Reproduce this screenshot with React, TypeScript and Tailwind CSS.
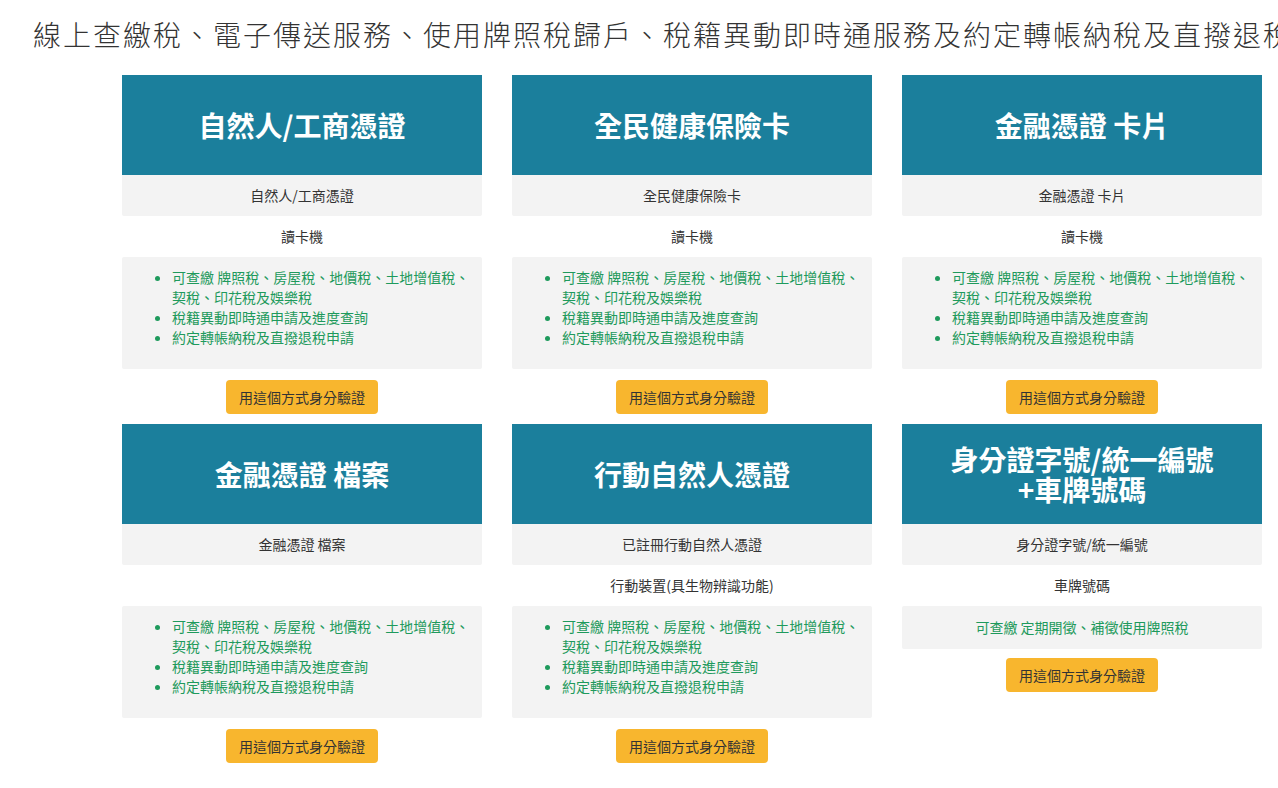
import React from "react";

type Card = {
  title: React.ReactNode;
  sub: string;
  device: string;
  simple?: string;
};

const cards: Card[] = [
  { title: "自然人/工商憑證", sub: "自然人/工商憑證", device: "讀卡機" },
  { title: "全民健康保險卡", sub: "全民健康保險卡", device: "讀卡機" },
  { title: "金融憑證 卡片", sub: "金融憑證 卡片", device: "讀卡機" },
  { title: "金融憑證 檔案", sub: "金融憑證 檔案", device: "" },
  { title: "行動自然人憑證", sub: "已註冊行動自然人憑證", device: "行動裝置(具生物辨識功能)" },
  {
    title: (
      <>
        身分證字號/統一編號
        <br />
        +車牌號碼
      </>
    ),
    sub: "身分證字號/統一編號",
    device: "車牌號碼",
    simple: "可查繳 定期開徵、補徵使用牌照稅",
  },
];

const items = [
  "可查繳 牌照稅、房屋稅、地價稅、土地增值稅、契稅、印花稅及娛樂稅",
  "稅籍異動即時通申請及進度查詢",
  "約定轉帳納稅及直撥退稅申請",
];

function CardView({ c }: { c: Card }) {
  return (
    <div className="flex flex-col">
      <div className="h-[100px] bg-[#1b7f9c] flex items-center justify-center text-center text-white text-[28px] font-bold leading-[30px]">
        <div>{c.title}</div>
      </div>
      <div className="h-[41px] bg-[#f3f3f3] rounded-b-[2px] flex items-center justify-center text-[14px] text-[#333]">
        {c.sub}
      </div>
      <div className="h-[41px] flex items-center justify-center text-[14px] text-[#333]">
        {c.device}
      </div>
      {c.simple ? (
        <div className="h-[43px] bg-[#f3f3f3] rounded-[2px] flex items-center justify-center text-[14px] text-[#1e9a5c]">
          {c.simple}
        </div>
      ) : (
        <div className="bg-[#f3f3f3] rounded-[2px] px-[10px] pt-[10px] pb-[10px]">
          <ul className="list-disc pl-[40px] mb-[12px] text-[14px] leading-[20px] text-[#1e9a5c] marker:text-[#1e9a5c]">
            {items.map((t) => (
              <li key={t}>{t}</li>
            ))}
          </ul>
        </div>
      )}
      <div className={c.simple ? "mt-[9px] flex justify-center" : "mt-[11px] flex justify-center"}>
        <button className="h-[34px] px-[13px] bg-[#f8b62e] rounded-[4px] text-[14px] text-[#333]">
          用這個方式身分驗證
        </button>
      </div>
    </div>
  );
}

export default function App() {
  return (
    <div
      className="min-h-screen bg-white overflow-hidden text-[#333]"
      style={{ fontFamily: '"Noto Sans CJK TC", "Noto Sans", sans-serif' }}
    >
      <h1 className="pl-[33px] pt-[14px] text-[28px] leading-[40px] tracking-[2px] whitespace-nowrap font-light text-[#333]">
        線上查繳稅、電子傳送服務、使用牌照稅歸戶、稅籍異動即時通服務及約定轉帳納稅及直撥退稅服務
      </h1>
      <div className="ml-[122px] mt-[21px] grid grid-cols-[repeat(3,360px)] gap-x-[30px] gap-y-[10px] items-start">
        {cards.map((c, i) => (
          <CardView key={i} c={c} />
        ))}
      </div>
    </div>
  );
}
